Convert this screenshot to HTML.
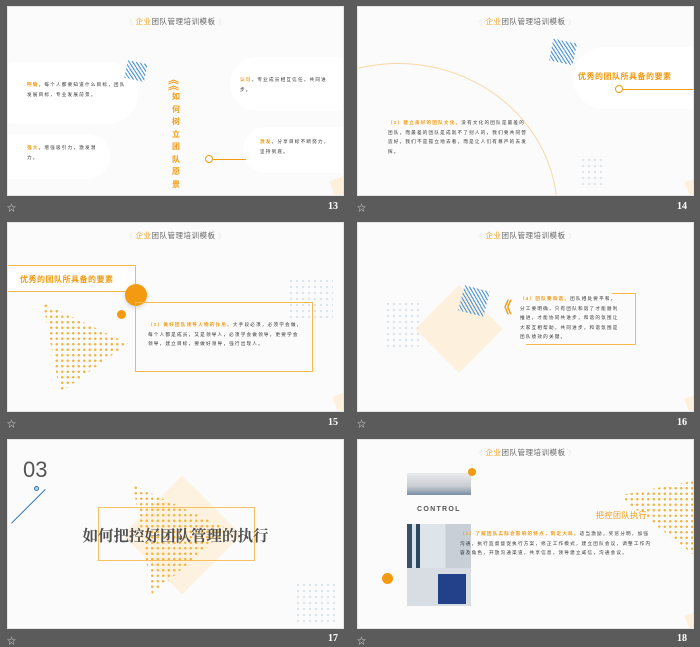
<!DOCTYPE html>
<html><head><meta charset="utf-8">
<style>
*{margin:0;padding:0;box-sizing:border-box}
body{width:700px;height:644px;background:#5b5b5b;position:relative;overflow:hidden;font-family:"Liberation Sans","Noto Sans CJK SC",sans-serif}
.s{position:absolute;width:337px;height:190px;background:#fbfbfc;overflow:hidden;border:1px solid #e6e6e6}
.a{position:absolute}
.hd{position:absolute;left:0;width:100%;top:9px;text-align:center;font-size:7.5px;color:#666;letter-spacing:0.5px}
.hd b{color:#f0a020;font-weight:normal}
.hd i{font-style:normal;color:#e4e8ee;font-size:7px}
.t{font-size:4.6px;line-height:9.5px;color:#333;letter-spacing:1.2px}
.o{color:#f39a10;font-weight:bold}
.blob{position:absolute;background:#fff;border-radius:30px}
.num{position:absolute;color:#fff;font-family:"Liberation Serif",serif;font-weight:bold;font-size:10px}
.star{position:absolute;color:#ddd;font-size:9px}
.stripe{position:absolute;background:repeating-linear-gradient(45deg,#5b9bd5 0 1.2px,transparent 1.2px 3px)}
.dots{position:absolute;background:radial-gradient(circle,#dfe3ea 1.1px,transparent 1.4px) 0 0/6px 6px}
.odots{position:absolute;background:radial-gradient(circle,#f6b441 1.1px,transparent 1.4px) 0 0/5.5px 5.5px}
.cream{position:absolute;background:#fdf1de}
</style></head><body>

<!-- slide 13 -->
<div class="s" style="left:7px;top:6px">
  <div class="hd"><i>《 </i><b>企业</b>团队管理培训模板<i> 》</i></div>
  <div class="blob" style="left:-20px;top:55px;width:150px;height:62px"></div>
  <div class="blob" style="left:-20px;top:127px;width:122px;height:45px"></div>
  <div class="blob" style="left:222px;top:50px;width:130px;height:54px"></div>
  <div class="blob" style="left:235px;top:120px;width:120px;height:46px"></div>
  <div class="stripe" style="left:118px;top:55px;width:20px;height:18px;transform:rotate(12deg)"></div>
  <div class="a t" style="left:19px;top:73px;width:100px"><span class="o">明确</span>。每个人都要知道什么目标，团队发展目标，专业发展前景。</div>
  <div class="a t" style="left:19px;top:136px;width:80px"><span class="o">强大</span>。增强吸引力，激发潜力。</div>
  <div class="a t" style="left:232px;top:68px;width:90px"><span class="o">认可</span>。专业成员相互信任，共同进步。</div>
  <div class="a t" style="left:252px;top:130px;width:70px"><span class="o">激发</span>。分享目标不断努力，坚持到底。</div>
  <div class="a" style="left:160px;top:70px;color:#f39a10;font-size:11px;line-height:6px;font-weight:bold">︽<br>︽</div>
  <div class="a" style="left:163px;top:84px;width:10px;color:#f39a10;font-size:8px;line-height:12.5px;font-weight:bold;text-align:center">如何树立团队愿景</div>
  <div class="a" style="left:197px;top:148px;width:8px;height:8px;border:1px solid #f39a10;border-radius:50%"></div>
  <div class="a" style="left:205px;top:152px;width:33px;height:1px;background:#f39a10"></div>
  <div class="cream" style="left:325px;top:170px;width:20px;height:25px;transform:rotate(-20deg)"></div>
</div>
<div class="star" style="left:7px;top:201px">☆</div>
<div class="num" style="left:328px;top:201px">13</div>

<!-- slide 14 -->
<div class="s" style="left:357px;top:6px">
  <div class="hd"><i>《 </i><b>企业</b>团队管理培训模板<i> 》</i></div>
  <div class="a" style="left:-120px;top:56px;width:320px;height:300px;border:1px solid #f7d9a8;border-radius:50%"></div>
  <div class="blob" style="left:215px;top:40px;width:140px;height:62px;border-radius:40px 0 0 40px"></div>
  <div class="stripe" style="left:193px;top:34px;width:24px;height:22px;transform:rotate(12deg)"></div>
  <div class="a" style="left:220px;top:64px;color:#f39a10;font-size:8px;font-weight:bold;letter-spacing:0.5px">优秀的团队所具备的要素</div>
  <div class="a" style="left:257px;top:78px;width:8px;height:8px;border:1px solid #f39a10;border-radius:50%"></div>
  <div class="a" style="left:265px;top:82px;width:75px;height:1px;background:#f39a10"></div>
  <div class="a t" style="left:30px;top:111px;width:140px"><span class="o">（2）建立良好的团队文化。</span>没有文化的团队是最差的团队，而最差的团队是成就不了别人的，我们要共同营造好，我们不是孤立地去看，而是让人们有尊严的去发挥。</div>
  <div class="dots" style="left:222px;top:150px;width:26px;height:28px"></div>
  <div class="cream" style="left:330px;top:172px;width:16px;height:22px;transform:rotate(-20deg)"></div>
</div>
<div class="star" style="left:357px;top:201px">☆</div>
<div class="num" style="left:677px;top:201px">14</div>

<!-- slide 15 -->
<div class="s" style="left:7px;top:222px">
  <div class="hd" style="top:7px"><i>《 </i><b>企业</b>团队管理培训模板<i> 》</i></div>
  <div class="a" style="left:-2px;top:42px;width:130px;height:27px;border:1.3px solid #f7b84c;border-left:none;background:#fff"></div>
  <div class="a" style="left:12px;top:51px;color:#f39a10;font-size:8px;font-weight:bold;letter-spacing:0.5px">优秀的团队所具备的要素</div>
  <div class="a" style="left:117px;top:61px;width:22px;height:22px;background:#f39a10;border-radius:50%;box-shadow:0 2px 4px rgba(0,0,0,.15)"></div>
  <div class="a" style="left:109px;top:87px;width:9px;height:9px;background:#f39a10;border-radius:50%"></div>
  <div class="odots" style="left:35px;top:80px;width:85px;height:90px;clip-path:polygon(0 0,100% 45%,20% 100%)"></div>
  <div class="a" style="left:127px;top:79px;width:178px;height:70px;border:1.3px solid #f7b84c"></div>
  <div class="a t" style="left:140px;top:97px;width:155px"><span class="o">（2）做好团队领导人物的作用。</span>大手段必须，必须学会做，每个人都是成员，又是领导人，必须学会做领导，更要学会领导，建立目标，要做好领导，强行出现人。</div>
  <div class="dots" style="left:280px;top:55px;width:45px;height:40px"></div>
  <div class="cream" style="left:328px;top:170px;width:18px;height:25px;transform:rotate(-20deg)"></div>
</div>
<div class="star" style="left:7px;top:417px">☆</div>
<div class="num" style="left:328px;top:417px">15</div>

<!-- slide 16 -->
<div class="s" style="left:357px;top:222px">
  <div class="hd" style="top:7px"><i>《 </i><b>企业</b>团队管理培训模板<i> 》</i></div>
  <div class="cream" style="left:70px;top:75px;width:62px;height:62px;transform:rotate(45deg)"></div>
  <div class="dots" style="left:27px;top:78px;width:38px;height:50px"></div>
  <div class="stripe" style="left:103px;top:65px;width:26px;height:26px;transform:rotate(15deg)"></div>
  <div class="a" style="left:138px;top:78px;color:#f39a10;font-size:16px;font-weight:bold;line-height:16px">《</div>
  <div class="a" style="left:168px;top:70px;width:110px;height:52px;border:1.3px solid #f7b84c;border-left:none;border-top:none"></div>
  <div class="a" style="left:254px;top:70px;width:24px;height:4px;border-top:1.3px solid #f7b84c"></div>
  <div class="a t" style="left:162px;top:71px;width:100px;background:#fbfbfc"><span class="o">（4）团队要和谐。</span>团队相处要平和，分工要明确，只有团队和谐了才能顺利推进，才能协同共进步，和谐的氛围让大家互相帮助，共同进步，和谐氛围是团队绩效的关键。</div>
  <div class="cream" style="left:330px;top:172px;width:18px;height:25px;transform:rotate(-20deg)"></div>
</div>
<div class="star" style="left:357px;top:417px">☆</div>
<div class="num" style="left:677px;top:417px">16</div>

<!-- slide 17 -->
<div class="s" style="left:7px;top:439px">
  <div class="a" style="left:15px;top:17px;font-size:22px;color:#555;font-family:'Liberation Sans',sans-serif">03</div>
  <div class="a" style="left:-11px;top:49px;width:48px;height:1px;background:#2e75b6;transform:rotate(-45deg);transform-origin:100% 0"></div>
  <div class="a" style="left:26px;top:46px;width:5px;height:5px;border-radius:50%;background:#bcd6ef;border:1px solid #2e75b6"></div>
  <div class="cream" style="left:132px;top:53px;width:84px;height:84px;transform:rotate(45deg);background:#fdf2e0"></div>
  <div class="a" style="left:90px;top:67px;width:157px;height:54px;border:1.3px solid #f7c060"></div>
  <div class="odots" style="left:125px;top:45px;width:95px;height:110px;clip-path:polygon(0 0,100% 40%,20% 100%)"></div>
  <div class="a" style="left:0;width:100%;top:84px;text-align:center;font-size:15.5px;color:#505050;font-family:'Liberation Serif','Noto Serif CJK SC',serif;font-weight:bold">如何把控好团队管理的执行</div>
  <div class="dots" style="left:287px;top:142px;width:40px;height:40px"></div>
</div>
<div class="star" style="left:7px;top:634px">☆</div>
<div class="num" style="left:328px;top:633px">17</div>

<!-- slide 18 -->
<div class="s" style="left:357px;top:439px">
  <div class="hd" style="top:7px"><i>《 </i><b>企业</b>团队管理培训模板<i> 》</i></div>
  <div class="a" style="left:49px;top:33px;width:64px;height:22px;background:linear-gradient(#e9ebee,#c9ccd0 60%,#7a8ea6)"></div>
  <div class="a" style="left:110px;top:28px;width:8px;height:8px;border-radius:50%;background:#f39a10"></div>
  <div class="a" style="left:59px;top:66px;font-size:7px;font-weight:bold;color:#555;letter-spacing:1.3px">CONTROL</div>
  <div class="a" style="left:49px;top:84px;width:64px;height:82px;background:linear-gradient(90deg,#36506a 0 8%,#d8e0e8 8% 14%,#2e4860 14% 20%,#dde4ea 20% 60%,#c8cfd6 60%)"></div>
  <div class="a" style="left:49px;top:128px;width:64px;height:38px;background:#d7dde3"></div>
  <div class="a" style="left:80px;top:134px;width:28px;height:30px;background:#23418a"></div>
  <div class="a" style="left:24px;top:133px;width:11px;height:11px;border-radius:50%;background:#f39a10"></div>
  <div class="odots" style="left:260px;top:40px;width:80px;height:78px;clip-path:polygon(0 20%,100% 0,100% 100%)"></div>
  <div class="a" style="left:238px;top:70px;color:#f39a10;font-size:8px;letter-spacing:0.5px">把控团队执行</div>
  <div class="a t" style="left:102px;top:89px;width:194px"><span class="o">（1）了解团队实际会影响的特点，制定大局。</span>适当激励，奖惩分明，加强沟通，执行监督督促执行方案，修正工作模式，建立团队会议，调整工作内容及角色，开放沟通渠道，共享信息，领导建立威信，沟通会议。</div>
  <div class="cream" style="left:330px;top:172px;width:18px;height:25px;transform:rotate(-20deg)"></div>
</div>
<div class="star" style="left:357px;top:634px">☆</div>
<div class="num" style="left:677px;top:633px">18</div>

</body></html>
